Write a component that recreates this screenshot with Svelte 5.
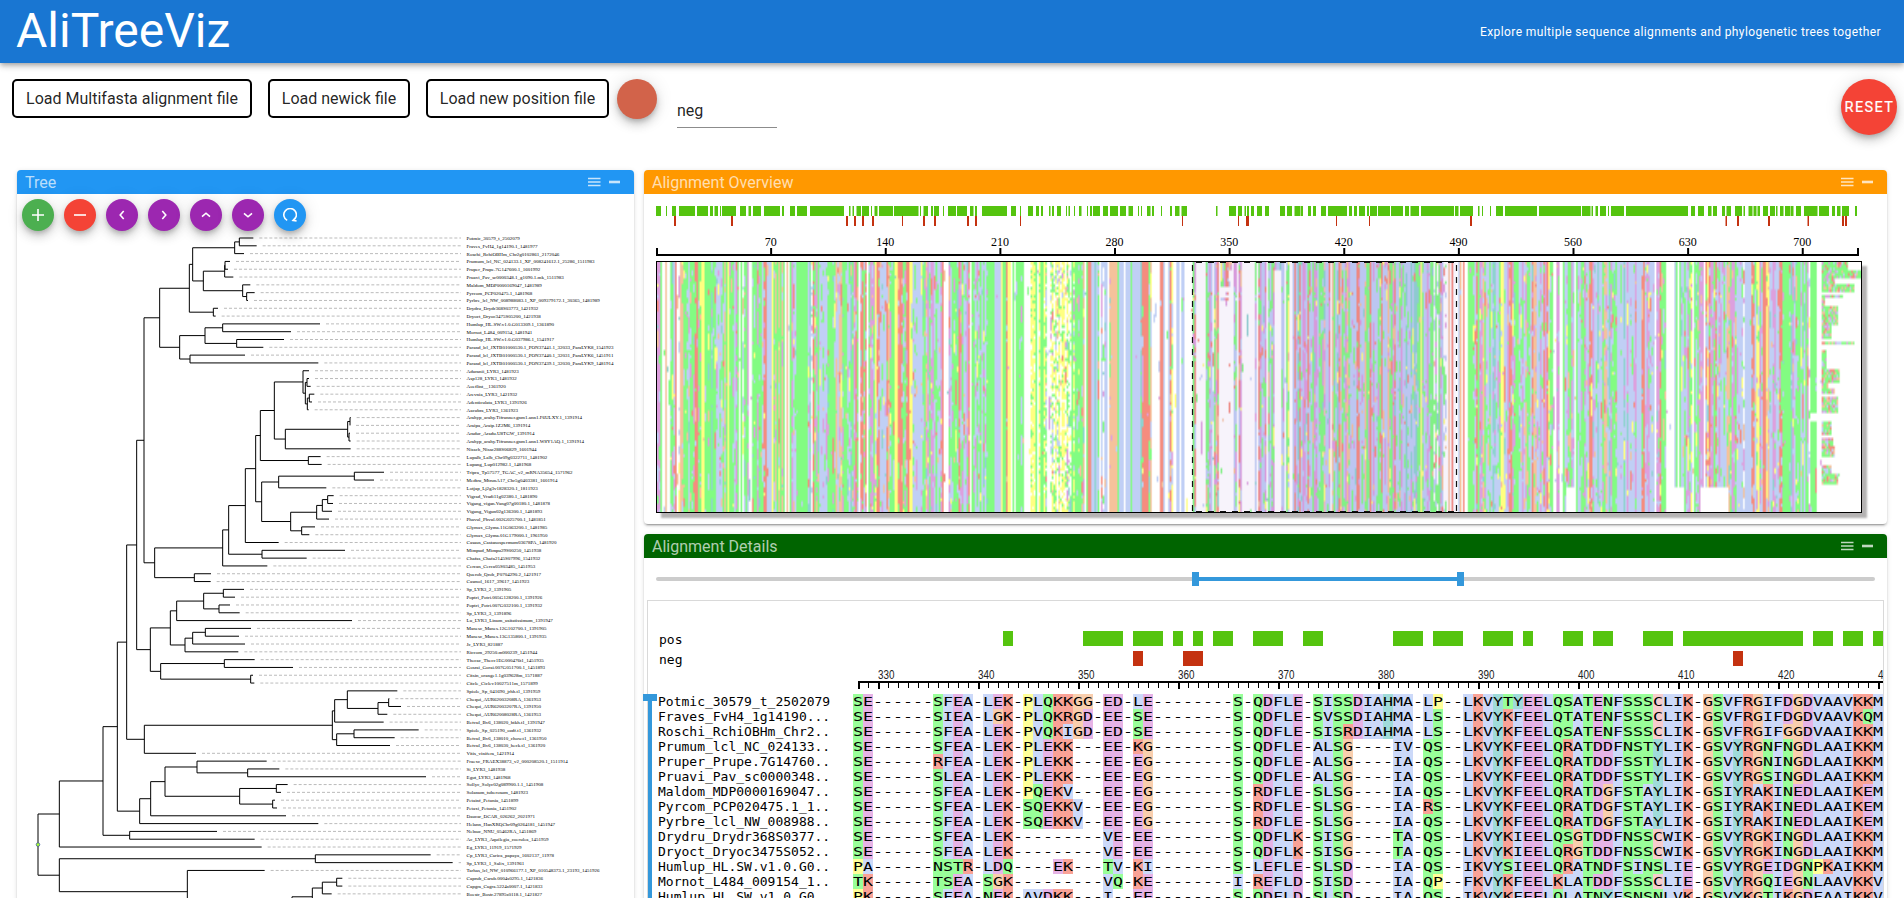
<script>
  import { onMount } from 'svelte';

  const labels = `Potmic_30579_t_2502079
Fraves_FvH4_1g14190.1_1481977
Roschi_RchiOBHm_Chr2g0102861_2172046
Prumum_lcl_NC_024133.1_XP_008241612.1_25286_1511983
Pruper_Prupe.7G147600.1_1601992
Pruavi_Pav_sc0000348.1_g1090.1.mk_1511983
Maldom_MDP0000169047_1481989
Pyrcom_PCP020475.1_1481968
Pyrbre_lcl_NW_008988083.1_XP_009379172.1_30365_1481989
Drydru_Drydr368S03773_1421932
Dryoct_Dryoc3475S05200_1421938
Humlup_HL.SW.v1.0.G013309.1_1361890
Mornot_L484_009154_1481941
Humlup_HL.SW.v1.0.G037986.1_1541917
Parand_lcl_JXTB01000530.1_PON37441.1_32033_ParaLYK8_1541923
Parand_lcl_JXTB01000530.1_PON37440.1_32031_ParaLYK6_1451911
Parand_lcl_JXTB01000530.1_PON37439.1_32030_ParaLYK9_1481914
Aduranii_LYR3_1481923
Asp128_LYR3_1481932
Aoeflint__1361920
Arevnia_LYR3_1421932
Adenticulata_LYR3_1391926
Aacubra_LYR3_1361923
Arahyp_arahy.Tifrunner.gnm1.ann1.F6ULXY.1_1391914
Araipa_Araip.1Z2M6_1391914
Aradur_Aradu.U8TGW_1391914
Arahyp_arahy.Tifrunner.gnm1.ann1.W8Y1AQ.1_1391914
Nissch_Nissc288S06829_1601944
Lupalb_Lalb_Chr09g0322711_1481902
Lupang_Lup012982.1_1481968
Tripra_Tp57577_TGAC_v2_mRNA35654_1571962
Medtru_MtrunA17_Chr5g0403381_1601914
Lotjap_Lj2g3v1828320.1_1811923
Vigrad_Vradi11g02380.1_1481890
Vigang_vigan.Vang07g00180.1_1481878
Vigung_Vigun02g136300.1_1481893
Phavul_Phvul.002G025700.1_1481851
Glymax_Glyma.11G063200.1_1481985
Glymax_Glyma.01G179000.1_1961950
Casaus_Castanospermum03678PA_1481920
Mimpud_Mimpu29S00250_1451938
Chafas_Chafa2145S07996_1541932
Cercan_Cerca05S03485_1451953
Querob_Qrob_P0704290.2_1421917
Casmol_1617_39617_1451923
Sp_LYR3_2_1391905
Poptri_Potri.005G128200.1_1391926
Poptri_Potri.007G032100.1_1391932
Sp_LYR3_3_1391896
Lu_LYR3_Linum_usitatissimum_1391947
Manesc_Manes.12G102700.1_1391905
Manesc_Manes.13G135800.1_1391935
Jc_LYR3_821887
Riccom_29250.m000239_1451944
Thecac_Thecc1EG000476t1_1451935
Gosrai_Gorai.007G051700.1_1451893
Citsin_orange1.1g039628m_1571887
Citcle_Ciclev10027511m_1571899
Spiole_Sp_041690_jrhh.t1_1391959
Chequi_AUR62003208RA_1361953
Chequi_AUR62003207RA_1391950
Chequi_AUR62008028RA_1361953
Betvul_Bv6_138020_htkh.t1_1391947
Spiole_Sp_025190_ozdf.t1_1361932
Betvul_Bv6_138010_chow.t1_1361950
Betvul_Bv6_138030_heck.t1_1361920
Vitis_vinifera_1421914
Fraexc_FRAEX38873_v2_000208520.1_1511914
Si_LYR3_1481938
Egut_LYR3_1481968
Sollyc_Solyc02g089900.1.1_1451908
Solanum_tuberosum_1481923
Petainf_Petunia_1451899
Petaxi_Petunia_1451902
Daucar_DCAR_026262_2021971
Helann_HanXRQChr09g0264181_1451947
Nelnuc_NNU_05462RA_1451869
Ac_LYR3_Aquilegia_coerulea_1451959
Eg_LYR3_11919_1571929
Cp_LYR3_Carica_papaya_1602137_11978
Sp_LYR3_1_Salix_1391961
Tarhas_lcl_NW_010966177.1_XP_010548373.1_23193_1451926
Caprub_Carub.0004s0295.1_1421836
Capgra_Cagra.5224s0007.1_1421833
Boestr_Bostr.27895s0118.1_1421827`.split('\n');

  // Branch tips, in thirds of a pixel
  const tips = [760,770,732,690,684,700,751,764,744,654,647,960,873,852,790,735,955,927,927,932,943,936,926,1052,1050,1050,1052,1052,962,965,1152,1122,979,1001,999,996,987,945,928,836,1035,920,802,633,632,732,705,690,719,1056,753,717,735,715,764,879,759,763,1192,1168,1203,1162,1151,1256,1184,1170,588,800,838,1278,863,843,825,831,858,955,651,764,785,1292,1358,794,1027,1027,995,1000,1000,1000,1000,1000,1000];

  // [x, child, child]; a number is a leaf index
  const tree = [114,
    [178,
      [309,
        [352,
          [380,
            [410,
              [432,
                [479,
                  [568, [578, [704, [718, 0, 1], 2], [610, [674, [675, 3, 4], 5], [728, 6, [740, 7, 8]]]], [640, 9, 10]],
                  [539, [615, [668, 11, 12], [710, 13, 14]], [570, 15, 16]]],
                [464,
                  [668,
                    [686,
                      [736,
                        [767,
                          [781,
                            [823,
                              [909, 17, [916, [921, 18, 19], [922, [928, 20, 21], 22]]],
                              [856, [1043, [1050, 23, 24], [1047, 25, 26]], 27]],
                            [925, 28, 29]],
                          [785,
                            [836, [1063, 30, 31], 32],
                            [872, [950, [967, [983, 33, 34], 35], 36], [905, 37, 38]]]],
                        39],
                      [786, 40, 41]],
                    42],
                  [583, 43, 44]]],
              [451,
                [511,
                  [530, [611, [670, 45, 46], [657, 47, 48]], 49],
                  [555, [578, [616, 50, 51], 52], 53]],
                [482, [673, 54, 55], [752, 56, 57]]]],
            [433,
              [997, [1004, [1042, 58, [1134, [1166, 59, 60], 61]], 62], [1010, [1062, 63, 64], 65]],
              66]],
          [419,
            [452,
              [495, [591, 67, [743, 68, 69]], [719, [829, 70, 71], [818, 72, 73]]],
              74],
            75]],
        [389, 76, 77]],
      78],
    [178,
      [946, 79, 80],
      [562, 81, [876, [937, [967, [1010, 82, 83], 84], [960, 85, 86]], [950, [960, 87, 88], [960, 89, 90]]]]]];

  const leafY = (i) => 18 + i * 7.808;
  let treePath = '';
  function layout(node, fromX) {
    if (typeof node === 'number') {
      const y = leafY(node);
      treePath += `M${fromX / 3 - 18} ${y}H${tips[node] / 3 - 18}`;
      return y;
    }
    const ys = node.slice(1).map((child) => layout(child, node[0]));
    const y = (ys[0] + ys[ys.length - 1]) / 2;
    const x = node[0] / 3 - 18;
    treePath += `M${fromX / 3 - 18} ${y}H${x}M${x} ${ys[0]}V${ys[ys.length - 1]}`;
    return y;
  }
  const rootY = layout(tree, 114);

  const tail7 = 'LKVYKFEELQRATDGFSTAYLIK-GSIYRAKINEDLAAIKEM';
  const gap8 = '--------';
  const sequences = [
    ['Potmic_30579_t_2502079', 'SE------SFEA-LEK-PLQKKGG-ED-LE' + gap8 + 'S-QDFLE-SISSDIAHMA-LP--LKVYTYEELQSATENFSSSCLIK-GSVFRGIFDGDVAAVKKM'],
    ['Fraves_FvH4_1g14190...', 'SE------SIEA-LGK-PLQKRGD-EE-SE' + gap8 + 'S-QDFLE-SVSSDIAHMA-LS--LKVYKFEELQTATENFSSSCLIK-GSVFRGIFDGDVAAVKQM'],
    ['Roschi_RchiOBHm_Chr2..', 'SE------SFEA-LEK-PVQKIGD-ED-SE' + gap8 + 'S-QDFLE-SISRDIAHMA-LS--LKVYKFEELQSATENFSSSCLIK-GSVFRGIFGGDVAAIKKM'],
    ['Prumum_lcl_NC_024133..', 'SE------SFEA-LEK-PLEKK---EE-KG' + gap8 + 'S-QDFLE-ALSG----IV-QS--LKVYKFEELQRATDDFNSTYLIK-GSVYRGNFNGDLAAIKKM'],
    ['Pruper_Prupe.7G14760..', 'SE------RFEA-LEK-PLEKK---EE-EG' + gap8 + 'S-QDFLE-ALSG----IA-QS--LKVYKFEELQRATDDFSSTYLIK-GSVYRGNINGDLAAIKKM'],
    ['Pruavi_Pav_sc0000348..', 'SE------SLEA-LEK-PLEKK---EE-EG' + gap8 + 'S-QDFLE-ALSG----IA-QS--LKVYKFEELQRATDDFSSTYLIK-GSVYRGSINGDLAAIKKM'],
    ['Maldom_MDP0000169047..', 'SE------SFEA-LEK-PQEKV---EE-EG' + gap8 + 'S-RDFLE-SLSG----IA-QS--' + tail7],
    ['Pyrcom_PCP020475.1_1..', 'SE------SFEA-LEK-SQEKKV--EE-EG' + gap8 + 'S-RDFLE-SLSG----IA-RS--' + tail7],
    ['Pyrbre_lcl_NW_008988..', 'SE------SFEA-LEK-SQEKKV--EE-EG' + gap8 + 'S-RDFLE-SLSG----IA-QS--' + tail7],
    ['Drydru_Drydr368S0377..', 'SE------SFEA-LEK---------VE-EE' + gap8 + 'S-QDFLK-SISG----TA-QS--LKVYKIEELQSGTDDFNSSCWIK-GSVYRGKINGDLAAIKKM'],
    ['Dryoct_Dryoc3475S052..', 'SE------SFEA-LEK---------VE-EE' + gap8 + 'S-QDFLK-SISG----TA-QS--LKVYKIEELQRGTDDFNSSCWIK-GSVYRGKINGDLAAIKKM'],
    ['Humlup_HL.SW.v1.0.G0..', 'PA------NSTR-LDQ----EK---TV-KI' + gap8 + 'S-LEFLE-SLSD----IA-QS--IKVYSIEELQRATNDFSINSLIE-GSVYRGEIDGNPKAIKKM'],
    ['Mornot_L484_009154_1..', 'TK------TSEA-SGK---------VQ-KE' + gap8 + 'I-REFLD-SISD----IA-QP--FKVYKFEELKLATDDFSSSCLIE-GSVYRGQIEGNLAAVKKV'],
    ['Humlup_HL.SW.v1.0.G0..', 'PK------SFEA-NEK-AVDKK---I--EE' + gap8 + 'S-QDFLD-SLSD----IA-QS--IKVYKFEELQLATNYFSNSNLVK-GSVYKGTIKGDFAAIKKV']
  ];

  const groups = { STNQ: 'g', AFILMVW: 'b', ED: 'm', KR: 'r', G: 'o', P: 'y', HY: 't', C: 'c', '-': 'w' };
  const classOf = {};
  for (const [letters, cls] of Object.entries(groups)) for (const l of letters) classOf[l] = cls;
  const cellColor = { g: '#99ff99', b: '#ccd9f9', m: '#e6b3e6', r: '#f9a296', o: '#f9cfae', y: '#ffff99', t: '#a0dbd9', c: '#f7cccc' };

  function runs(seq) {
    const out = [];
    for (let i = 0; i < seq.length; i++) {
      const c = classOf[seq[i]];
      const last = out[out.length - 1];
      if (last && last.c === c) last.n++;
      else out.push({ c, i, n: 1 });
    }
    return out.filter((r) => r.c !== 'w');
  }

  const posBlocks = [[15,1],[23,4],[28,3],[32,1],[34,1],[36,2],[40,3],[45,2],[54,3],[58,3],[63,3],[67,1],[71,2],[74,2],[79,3],[83,12],[96,2],[99,2],[102,2]];
  const negBlocks = [[28,1],[33,2],[88,1]];

  // Overview annotation tracks, [start, end] pairs; the second half is offset by 1528.8 units
  const HALF = 1528.8;
  const pairs = (s, off) => s.split(',').map((p) => p.split('-').map((v) => +v + off));
  const posTrack = [
    ...pairs('39-51,64-66,78-88,96-135,140-167,171-179,183-191,196-198,201-235,245-260,266-272,277-296,304-343,348-353,367-380,385-409,416-500,512-516,521-524,531-541,544-561,566-568,575-582,586-620,622-682,686-688,694-706,713-718,720-733,742-745,755-774,777-801,808-817,821-826,838-899,909-921,931-933,951-963,970-978,982-987,1002-1006,1009-1014,1022-1031,1044-1046,1050-1053,1063-1066,1076-1082,1095-1098,1102-1107,1110-1127,1134-1147,1151-1171,1176-1191,1197-1208,1220-1223,1227-1230,1242-1251,1254-1259,1276-1279,1299-1304,1311-1322,1327-1340,1411-1415,1443-1460,1465-1475,1481-1485,1487-1492,1497-1504,1512-1524', 0),
    ...pairs('2-12,39-51,56-69,75-90,91-96,108-115,120-127,140-152,157-203,208-216,220-228,233-248,252-257,260-277,279-309,311-341,345-355,359-380,385-465,468-477,480-512,524-528,534-537,554-556,568-586,590-669,674-777,779-800,802-806,812-818,823-838,843-845,850-882,887-1039,1046-1056,1063-1078,1088-1096,1100-1110,1122-1130,1133-1144,1154-1171,1175-1178,1187-1197,1199-1207,1209-1215,1223-1235,1240-1252,1254-1258,1264-1273,1276-1290,1291-1297,1303-1316,1323-1356,1360-1384,1392-1399,1404-1412,1416-1433,1448-1453', HALF)
  ];
  const negTrack = [
    ...pairs('83-88,223-228,505-510,524-529,544-549,568-573,642-644,693-698,720-725,801-806,821-826,931-933,1328-1330,1465-1468,1485-1492', 0),
    ...pairs('176-179,257-260,505-510,1131-1134,1159-1164,1235-1240,1332-1335,1416-1421,1423-1428', HALF)
  ];
  const tx = (v) => Math.round((v / 2.45 - 16) * 2) / 2;
  const overviewTicks = [70, 140, 210, 280, 350, 420, 490, 560, 630, 700];

  // Column consensus: upper case is conserved, lower case is variable
  const filler = 'bgmgbrgbtgbogmb';
  const consensus = [
    ['mmGWWOWWggbRWwOogggbgggrRggYYgGgGtGgbbbbgoGYgggbmGWGwgGmWWggGmggbrRBBBYg', 70],
    ['YgoGoGoGWOWGmbbGGGGGGGbtwrgmgbbbbbgGGggoboogGgbbtgmrgWrrgrWgmmgyrrbbbbYg', 70],
    ['rogGGYYrRrggrRYybbbBBbggomgmmbgbbmRWWWmbggggrmgbbmrWggbgbgbgbgGGGGBBBB', 70],
    ['YGGrYYWGWGGGgGWWWWYYYGWYGGYgWWwywywywyYwywwGyGggGgoWGRRBBTBgWbwbBWoOOO', 70],
    ['OGBBBWBBBGBBBBBtrRRRgoWWWWWRRBWWBryWWBBWBBWWWWW', 47],
    ['', 103],
    ['bboGgrbmbbggrbbboggmrbbgmbbtbBtbttggYgbbmbggwgwgmbwwWOWRWWWB', 60],
    ['OWRWWGGGgbrGmmogbbgbttbbgyYbbmrrmgGGbbmboggbroobbmbrmryggWWmmWWGbbggmbb', 70],
    ['WGbbggmbbrrmbbtbbgoobtmgggBBbBtBmBbbbmBBBrRbmmbbbWmmrgggWWWWWBGWGbbgbm', 70],
    ['gyWgbgmmmWryrmmgrbmbbgboogmmgbbbbwBBBBrrbyymbRRyobbmmbbrrgGGGgtmbggGbg', 70],
    ['bGmwGGGgWWWW', 12]
  ].map(([s, n]) => {
    let out = s;
    while (out.length < n) out += filler[(out.length * 7) % filler.length];
    return out.slice(0, n);
  }).join('');

  const tails = [];
  for (const [n, len] of [[3,16],[3,24],[2,8],[3,20],[1,0],[1,13],[3,2],[7,10],[5,6],[1,0],[1,20],[2,0],[7,3],[5,11],[2,4],[2,8],[1,0],[6,10],[3,0],[5,6],[1,0],[3,7],[4,8],[3,0],[3,6],[1,11],[3,10],[12,0]]) {
    for (let k = 0; k < n; k++) tails.push(len);
  }

  const rgb = { g: [130,252,130], b: [192,207,245], m: [221,160,222], r: [245,140,126], o: [245,194,155], y: [255,255,128], t: [142,211,208], c: [242,191,191], w: [255,255,255] };
  const COLS = 735;
  const ROWS = 91;
  let canvas;

  onMount(() => {
    const ctx = canvas.getContext('2d');
    const image = ctx.createImageData(COLS, ROWS);
    let seed = 7;
    const rnd = () => ((seed = (seed * 1103515245 + 12345) & 0x7fffffff) / 0x7fffffff);
    const palette = 'gggbbbbmmmrotbgy';
    for (let x = 0; x < COLS; x++) {
      const base = consensus[x] ?? 'W';
      let current = null;
      for (let y = 0; y < ROWS; y++) {
        let main = base.toLowerCase();
        let variable = base !== base.toUpperCase();
        if (x >= 327 && x < 430) {
          main = classOf[sequences[Math.min(y, 12)][1][x - 327]];
          variable = main !== 'w';
          if (y < 14) main = classOf[sequences[y][1][x - 327]];
        }
        if (current) {
          if (rnd() < 0.28) current = null;
        } else if (rnd() < (variable ? 0.13 : 0.005)) {
          current = palette[Math.floor(rnd() * palette.length)];
        }
        let c = current && !(x >= 327 && x < 430 && y < 14) ? current : main;
        if (x >= 226 && x < 255 && base !== 'W' && base !== 'G' && rnd() < 0.35) c = 'wyg'[Math.floor(rnd() * 3)];
        if (x >= 711) c = x - 711 < tails[y] ? 'ggbgmogr'[Math.floor(rnd() * 8)] : 'w';
        if (y > 81 && ((x > 554 && x < 561) || (x > 620 && x < 627) || (x > 636 && x < 654))) c = 'w';
        if (y > 54 && y < 58 && x > 703) c = 'w';
        image.data.set([...rgb[c], 255], (y * COLS + x) * 4);
      }
    }
    ctx.putImageData(image, 0, 0);
  });

  const controls = [
    ['#4caf50', 'M7 1v12M1 7h12'],
    ['#f44336', 'M1 7h12'],
    ['#9c27b0', 'M8.7 3L5.2 7l3.5 4'],
    ['#9c27b0', 'M5.3 3L8.8 7l-3.5 4'],
    ['#9c27b0', 'M3 8.7L7 5.2l4 3.5'],
    ['#9c27b0', 'M3 5.3L7 8.8l4-3.5'],
    ['#2196f3', 'M4.2 12.4A6.3 6.3 0 1 1 10.2 12.3M12.8 9.2L10 12.4 13.6 13']
  ];
  const detailTicks = Array.from({ length: 103 }, (_, i) => i + 328);
</script>

{#snippet panelHead(title, color)}
  <div class="panel-head" style="background:{color}">
    <span>{title}</span>
    <svg width="34" height="12" viewBox="0 0 34 12">
      <path d="M0 2.5h12.5M0 6h12.5M0 9.5h12.5" stroke="#fff" stroke-opacity=".75" stroke-width="1.4" />
      <path d="M21 6h11" stroke="#fff" stroke-opacity=".75" stroke-width="2.6" />
    </svg>
  </div>
{/snippet}

<div class="page">
  <header>
    <h1>AliTreeViz</h1>
    <p>Explore multiple sequence alignments and phylogenetic trees together</p>
  </header>

  <div class="toolbar">
    <button class="file first">Load Multifasta alignment file</button>
    <button class="file second">Load newick file</button>
    <button class="file third">Load new position file</button>
    <span class="swatch"></span>
    <span class="field">neg</span>
    <button class="reset">RESET</button>
  </div>

  <main>
    <section class="panel tree">
      {@render panelHead('Tree', '#2196f3')}
      <div class="controls">
        {#each controls as [color, d]}
          <button style="background:{color}" aria-label="tree control">
            <svg width="14" height="14" viewBox="0 0 14 14"><path {d} fill="none" stroke="#fff" stroke-width="1.6" /></svg>
          </button>
        {/each}
      </div>
      <svg class="tree-plot" width="616" height="690">
        <path d={treePath} fill="none" stroke="#000" stroke-width="1" />
        {#each labels as label, i}
          <line x1={tips[i] / 3 - 12} x2="443" y1={leafY(i)} y2={leafY(i)} stroke="#aaa" stroke-width="0.8" stroke-dasharray="3 2" />
          <text x="448.6" y={leafY(i) + 1.9}>{label}</text>
        {/each}
        <circle cx="20" cy={rootY} r="1.8" fill="#adff2f" stroke="#3050a0" stroke-width="0.7" />
      </svg>
    </section>

    <div class="right">
      <section class="panel overview">
        {@render panelHead('Alignment Overview', '#ff9800')}
        <svg class="tracks" width="1230" height="55">
          <g transform="translate(16 0)">
            {#each posTrack as [a, b]}<rect x={tx(a)} width={tx(b) - tx(a)} y="0" height="10" fill="#55c40f" />{/each}
            {#each negTrack as [a, b]}<rect x={tx(a)} width={tx(b) - tx(a)} y="10" height="10" fill="#c43210" />{/each}
          </g>
          <g transform="translate(16 0)">
            <path d="M1 42V49H1202V42" fill="none" stroke="#000" stroke-width="2" />
            {#each overviewTicks as t}
              <path d="M{0.5 + t * 1.6375} 42v7" stroke="#000" stroke-width="2" />
              <text x={t * 1.6375} y="40" text-anchor="middle">{t}</text>
            {/each}
          </g>
        </svg>
        <div class="map">
          <canvas bind:this={canvas} width={COLS} height={ROWS}></canvas>
          <svg width="1205" height="250">
            <rect x="535.5" y="0" width="264" height="250" />
            <path d="M535.5 3V250M799.5 3V250M539 .5H799M539 249.5H799" />
          </svg>
        </div>
      </section>

      <section class="panel details">
        {@render panelHead('Alignment Details', '#006400')}
        <div class="slider"><i class="range"></i><i class="knob a"></i><i class="knob b"></i></div>
        <div class="viewer">
          <svg width="1235" height="400">
            <g class="mono">
              <text x="11" y="44">pos</text>
              <text x="11" y="64">neg</text>
            </g>
            {#each posBlocks as [i, n]}<rect x={205 + i * 10} y="31" width={n * 10} height="15" fill="#55c40f" />{/each}
            {#each negBlocks as [i, n]}<rect x={205 + i * 10} y="51" width={n * 10} height="15" fill="#c43210" />{/each}
            <g shape-rendering="crispEdges">
              <rect x="210" y="81" width="1026" height="2" />
              {#each detailTicks as t, i}
                {#if t % 10 === 0 || i === 0}
                  <rect x={210 + i * 10} y="83" width="2" height="6" />
                {:else}
                  <rect x={210 + i * 10} y="83" width="1" height="5" />
                {/if}
              {/each}
            </g>
            {#each detailTicks.filter((t) => t % 10 === 0) as t}
              <text class="num" x={210 + (t - 328) * 10} y="79" textLength="16.5" lengthAdjust="spacingAndGlyphs">{t}</text>
            {/each}
            {#each sequences as [name, seq], r}
              <text class="mono" x="10" y={106 + r * 15}>{name}</text>
              {#each runs(seq) as run}
                <rect x={205 + run.i * 10} y={94 + r * 15} width={run.n * 10} height="15" fill={cellColor[run.c]} />
              {/each}
              <text class="mono" x="205" y={106 + r * 15} textLength="1030" lengthAdjust="spacingAndGlyphs">{seq}</text>
            {/each}
          </svg>
          <div class="vslider"></div>
        </div>
      </section>
    </div>
  </main>
</div>

<style>
  :global(body) { overflow: hidden; background: #fff; }
  .page { height: 898px; overflow: hidden; font-family: Roboto, sans-serif; color: rgba(0, 0, 0, 0.87); display: flex; flex-direction: column; }
  header { flex: none; height: 63px; background: #1976d2; color: #fff; display: flex; align-items: center; justify-content: space-between; padding: 0 23px 0 16px; box-shadow: 0 2px 4px -1px rgba(0,0,0,.2), 0 4px 5px rgba(0,0,0,.14), 0 1px 10px rgba(0,0,0,.12); }
  h1 { margin: 0; font-size: 48px; font-weight: 400; line-height: 50px; padding-bottom: 2px; }
  p { margin: 0; font-size: 12px; letter-spacing: 0.4px; }
  button { font-family: inherit; padding: 0; margin: 0; border: 0; color: inherit; }
  .toolbar { flex: none; height: 107px; box-sizing: border-box; padding: 16px 7px 0 12px; display: flex; align-items: flex-start; }
  .file { height: 39px; border: 2px solid #000; border-radius: 5px; background: #fff; font-size: 16px; margin-right: 16px; box-sizing: border-box; white-space: nowrap; }
  .first { width: 240px; }
  .second { width: 142px; }
  .third { width: 183px; margin-right: 8px; }
  .swatch { width: 40px; height: 40px; border-radius: 50%; background: #d2634a; box-shadow: 0 3px 5px -1px rgba(0,0,0,.2), 0 6px 10px rgba(0,0,0,.14), 0 1px 18px rgba(0,0,0,.12); }
  .field { margin: 19px 0 0 20px; width: 100px; height: 30px; line-height: 26px; border-bottom: 1px solid #8c8c8c; box-sizing: border-box; font-size: 16px; }
  .reset { margin-left: auto; width: 56px; height: 56px; border-radius: 50%; background: #f44336; color: #fff; font-size: 14.5px; font-weight: 400; letter-spacing: 1.4px; text-indent: 1px; box-shadow: 0 3px 5px -1px rgba(0,0,0,.2), 0 6px 10px rgba(0,0,0,.14), 0 1px 18px rgba(0,0,0,.12); -webkit-text-stroke: 0.2px #fff; }
  main { display: grid; grid-template-columns: 617px 1243px; column-gap: 10px; padding-left: 17px; align-items: start; }
  .panel { background: #fff; border-radius: 4px; box-shadow: 0 3px 1px -2px rgba(0,0,0,.2), 0 2px 2px rgba(0,0,0,.14), 0 1px 5px rgba(0,0,0,.12); }
  .panel-head { height: 24px; border-radius: 4px 4px 0 0; color: rgba(255,255,255,.7); display: flex; align-items: center; justify-content: space-between; padding: 0 12px 0 8px; font-size: 16px; box-sizing: border-box; }
  .tree { height: 760px; }
  .controls { display: flex; gap: 10px; padding: 5px 0 0 5px; height: 21px; }
  .controls button { width: 32px; height: 32px; border-radius: 50%; flex: none; display: grid; place-items: center; position: relative; box-shadow: 0 3px 5px -1px rgba(0,0,0,.2), 0 6px 10px rgba(0,0,0,.14), 0 1px 18px rgba(0,0,0,.12); }
  .tree-plot { display: block; margin-left: 1px; font: 5px "Liberation Serif", serif; }
  .right { display: grid; row-gap: 10px; }
  .overview { height: 354px; }
  .tracks { display: block; margin: 12px 0 0 -4px; font: 12px "Liberation Serif", serif; }
  .map { position: relative; margin-left: 12px; width: 1204px; height: 250px; border: 1px solid #000; box-shadow: 5px 5px 2px #b5b3b3; }
  .map canvas { display: block; width: 1204px; height: 250px; }
  .map svg { position: absolute; left: 0; top: 0; }
  .map rect { fill: rgba(140, 90, 200, 0.07); }
  .map path { fill: none; stroke: #111; stroke-width: 1.2; stroke-dasharray: 6 6; }
  .details { height: 500px; }
  .slider { position: relative; height: 4px; margin: 19px 12px 0; border-radius: 2px; background: #ccc; }
  .slider i { position: absolute; background: #3498db; }
  .range { left: 540px; width: 264px; height: 4px; top: 0; }
  .knob { width: 7px; height: 14px; top: -5px; }
  .a { left: 536px; }
  .b { left: 801px; }
  .viewer { position: relative; margin: 19px 3px 0 3px; border: 1px solid #d9d9d9; }
  .viewer svg { display: block; overflow: hidden; margin-top: -1px; }
  .mono { font: 13px "DejaVu Sans Mono", monospace; fill: #000; }
  .num { font: 12px "Liberation Sans", sans-serif; fill: #222; }
  .vslider { position: absolute; left: -5px; top: 93px; width: 14px; height: 7px; background: #3498db; }
  .vslider::after { content: ''; position: absolute; left: 5px; top: 7px; width: 4px; height: 300px; background: #3498db; }
</style>
